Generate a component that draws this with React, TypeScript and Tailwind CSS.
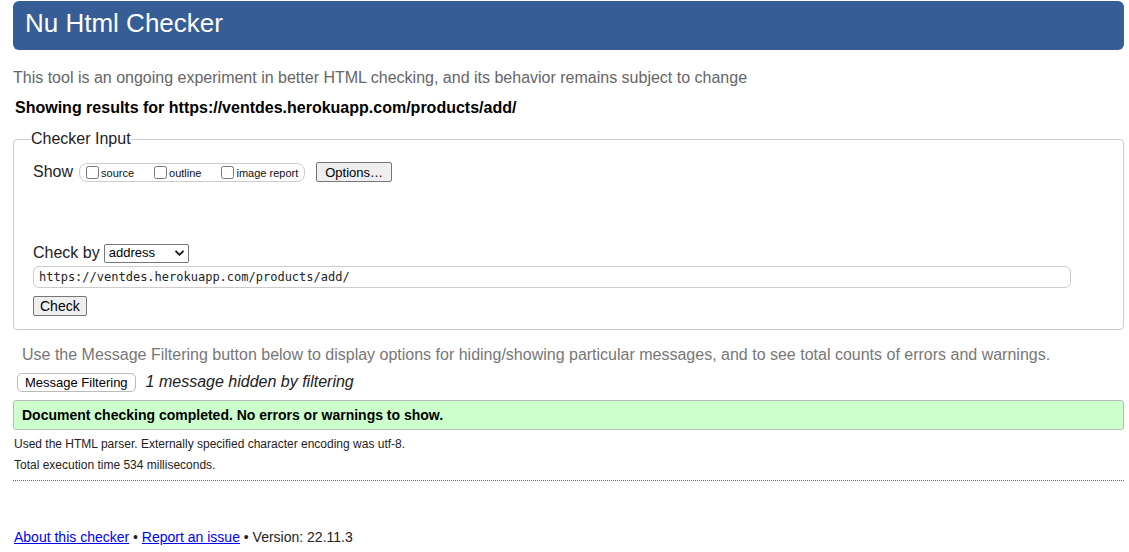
export default function App() {
  return (
    <div className="min-h-screen bg-white pl-[13px] pr-[5px] pt-[1px] font-['Liberation_Sans',Arial,sans-serif] text-[#111]">
      <header className="flex h-[49px] items-center rounded-[6px] bg-[#365d95] pb-[5px] pl-[12px]">
        <h1 className="text-[26px] leading-none text-white">Nu Html Checker</h1>
      </header>

      <p className="mt-[19px] text-[16px] leading-[18px] text-[#666]">
        This tool is an ongoing experiment in better HTML checking, and its behavior remains subject to change
      </p>
      <p className="mt-[12px] pl-[2px] text-[16px] font-bold leading-[18px] text-black">
        Showing results for https://ventdes.herokuapp.com/products/add/
      </p>

      <fieldset className="mt-[13px] h-[200px] rounded-[4px] border border-[#ccc] pl-[19px] pr-[52px]">
        <legend className="-ml-[2px] text-[16px] leading-[18px] text-[#222]">Checker Input</legend>

        <div className="mt-[12px] flex items-center">
          <span className="text-[16px] text-[#222]">Show</span>
          <div className="ml-[6px] flex h-[19px] items-center rounded-[8px] border border-[#ccc] pl-[6px] pr-[6px] text-[11px]">
            <label className="flex items-center">
              <input type="checkbox" className="m-0 h-[13px] w-[13px]" />
              <span className="ml-[2px] mt-[2px]">source</span>
            </label>
            <label className="ml-[20px] flex items-center">
              <input type="checkbox" className="m-0 h-[13px] w-[13px]" />
              <span className="ml-[2px] mt-[2px]">outline</span>
            </label>
            <label className="ml-[20px] flex items-center">
              <input type="checkbox" className="m-0 h-[13px] w-[13px]" />
              <span className="ml-[2px] mt-[2px]">image report</span>
            </label>
          </div>
          <button className="ml-[11px] h-[20px] rounded-[2px] border border-[#767676] bg-[#efefef] px-[8px] text-[13px] leading-none text-black">
            Options…
          </button>
        </div>

        <div className="mt-[57px] flex items-center">
          <span className="text-[16px] text-[#222]">Check by</span>
          <div className="ml-[4px] flex h-[19px] w-[85px] items-center justify-between rounded-[2px] border border-[#767676] bg-white pl-[4px] pr-[3px] text-[13px] text-black">
            <span>address</span>
            <svg width="11" height="8" viewBox="0 0 11 8">
              <path d="M1.5 1.8 L5.5 5.8 L9.5 1.8" fill="none" stroke="#111" strokeWidth="1.8" />
            </svg>
          </div>
        </div>

        <div className="mt-[1px] flex h-[22px] items-center rounded-[6px] border border-[#ccc] pl-[5px] font-['DejaVu_Sans_Mono',monospace] text-[12px] text-[#222]">
          https://ventdes.herokuapp.com/products/add/
        </div>

        <button className="mt-[8px] h-[20px] rounded-[2px] border border-[#767676] bg-[#efefef] px-[6px] text-[14px] leading-none text-black">
          Check
        </button>
      </fieldset>

      <p className="mt-[16px] pl-[9px] text-[16px] leading-[18px] text-[#777]">
        Use the Message Filtering button below to display options for hiding/showing particular messages, and to see total counts of errors and warnings.
      </p>
      <div className="mt-[6px] flex items-center pl-[4px]">
        <button className="h-[19px] rounded-[5px] border border-[#bbb] bg-white px-[7px] text-[13px] leading-none text-black">
          Message Filtering
        </button>
        <span className="ml-[10px] text-[16px] italic text-[#222]">1 message hidden by filtering</span>
      </div>

      <div className="mt-[6px] flex h-[30px] items-center rounded-[3px] border border-[#bbb] bg-[#ccffcc] pl-[8px] text-[14px] font-bold text-black">
        Document checking completed. No errors or warnings to show.
      </div>

      <p className="mt-[7px] pl-[1px] text-[12px] leading-[14px] text-[#222]">
        Used the HTML parser. Externally specified character encoding was utf-8.
      </p>
      <p className="mt-[7px] pl-[1px] text-[12px] leading-[14px] text-[#222]">Total execution time 534 milliseconds.</p>

      <div className="mt-[8px] border-t border-dotted border-[#666]" />

      <footer className="mt-[46px] pl-[1px] text-[14px] text-[#222]">
        <a href="#" className="text-[#0000ee] underline">About this checker</a> •{" "}
        <a href="#" className="text-[#0000ee] underline">Report an issue</a> • Version: 22.11.3
      </footer>
    </div>
  );
}
